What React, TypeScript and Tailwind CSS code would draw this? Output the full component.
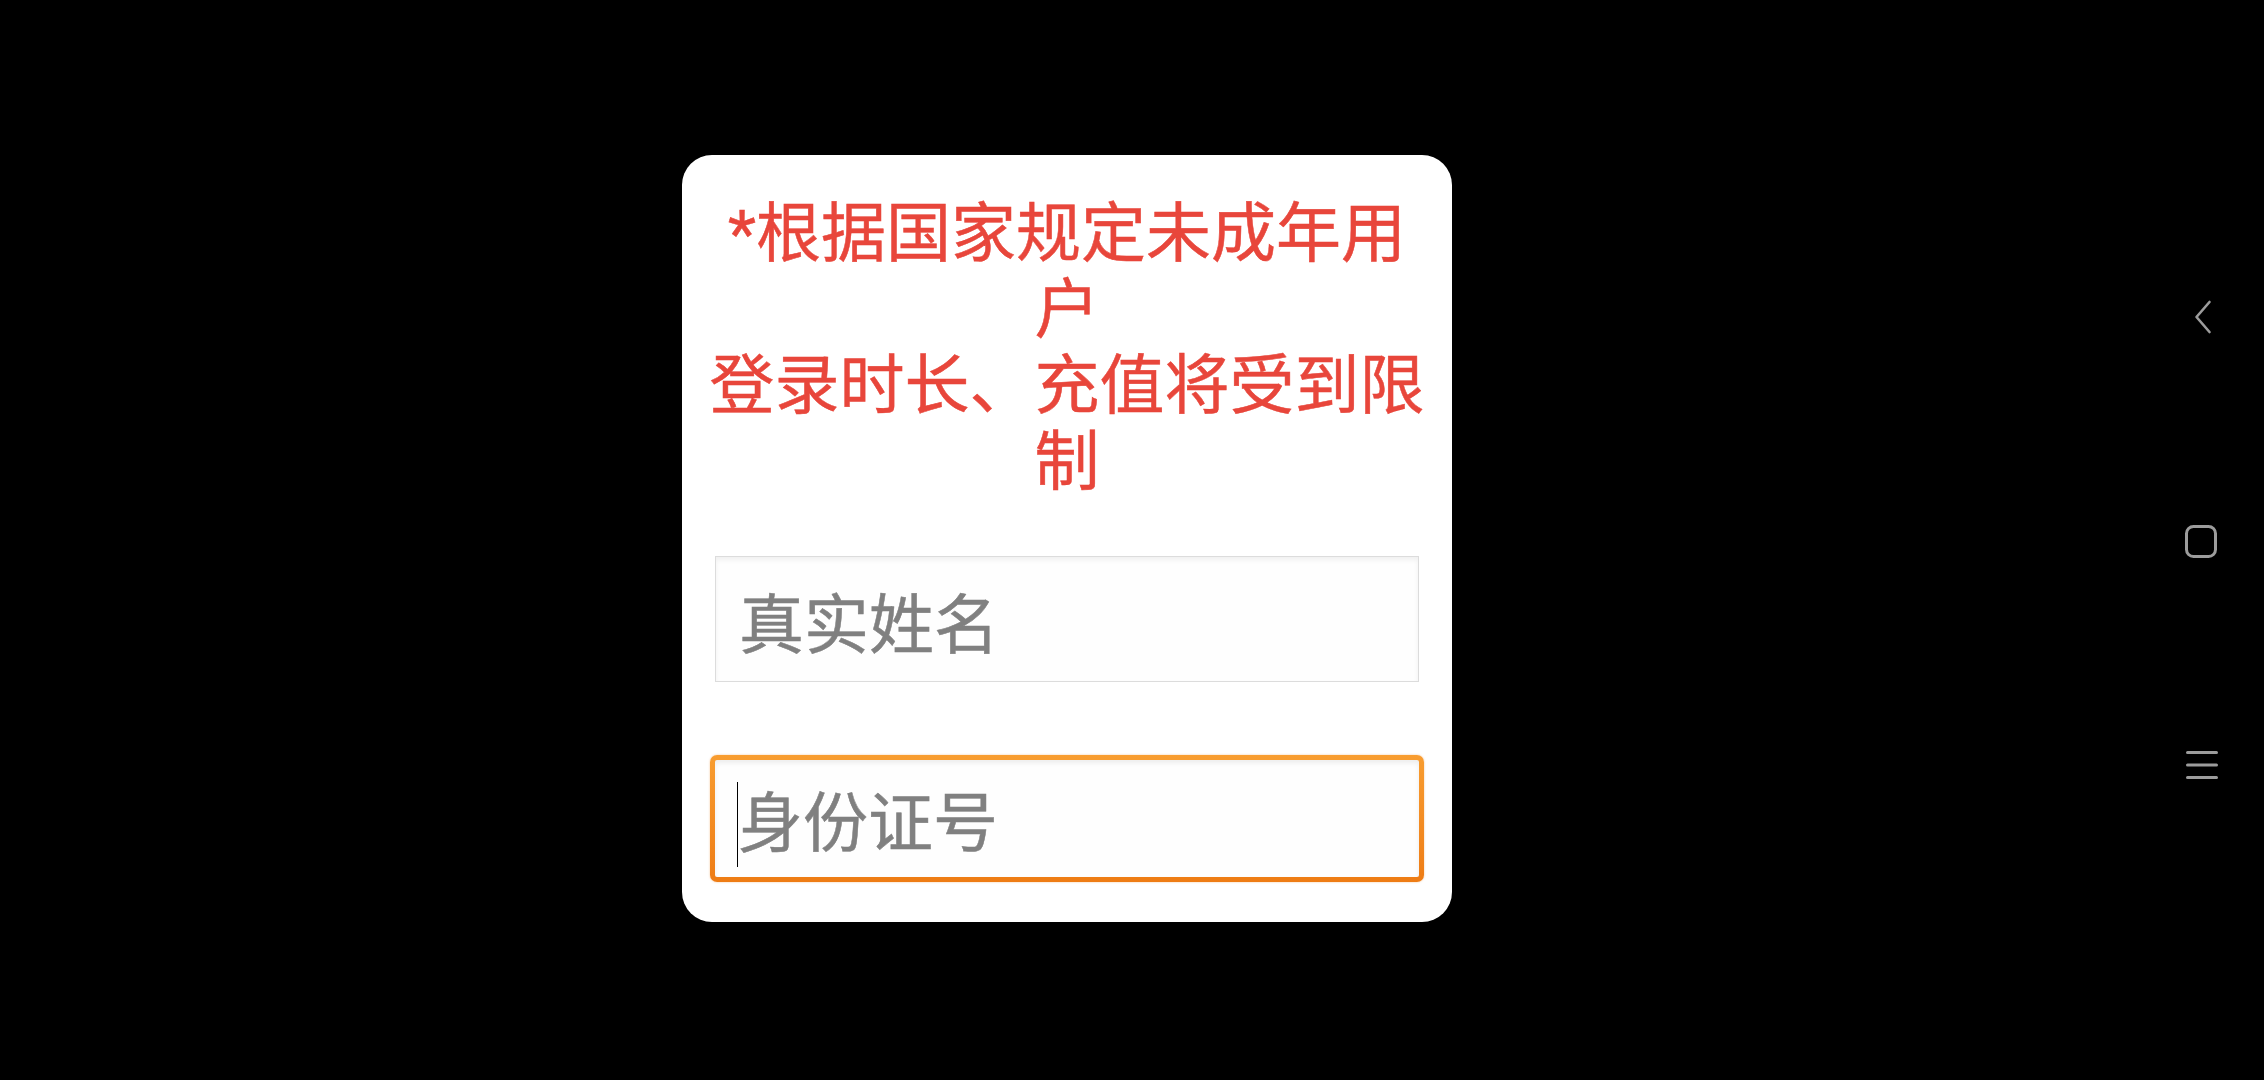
import React from "react";

const FONT = { fontFamily: 'Roboto, "Noto Sans CJK SC", "Noto Sans", sans-serif' };

function NavBar() {
  return (
    <div className="w-[130px] h-full flex flex-col items-start">
      <svg className="mt-[300px] ml-[59px]" width="20" height="34" viewBox="0 0 20 34" fill="none">
        <path d="M16.5 2 L3.5 17 L16.5 32" stroke="#9c9c9c" strokeWidth="2.6" strokeLinecap="round" strokeLinejoin="round" />
      </svg>
      <svg className="mt-[191px] ml-[51px]" width="32" height="33" viewBox="0 0 32 33" fill="none">
        <rect x="1.5" y="1.5" width="29" height="30" rx="7" stroke="#9c9c9c" strokeWidth="3" />
      </svg>
      <svg className="mt-[192px] ml-[52px]" width="32" height="31" viewBox="0 0 32 31" fill="none">
        <path d="M1.5 2.5 H30.5 M1.5 15 H30.5 M1.5 27.5 H30.5" stroke="#9c9c9c" strokeWidth="3" strokeLinecap="round" />
      </svg>
    </div>
  );
}

export default function App() {
  return (
    <div className="w-full h-screen bg-black flex overflow-hidden" style={FONT}>
      <div className="flex-1 flex items-center justify-center pb-[4px]">
        <div className="w-[770px] bg-white rounded-[30px] px-[25px] pt-[41px] pb-[40px] flex flex-col">
          <div className="w-full text-center text-[65px] leading-[76px] text-[#e8463b] [-webkit-text-stroke:0.5px_#e8463b]">
            <div>*根据国家规定未成年用户</div>
            <div>登录时长、充值将受到限制</div>
          </div>

          <div className="mt-[56px] self-center w-[704px] h-[126px] border border-[#dcdcdc] bg-[#fefefe] shadow-[inset_0_3px_5px_rgba(0,0,0,0.06)] flex items-center pl-[23px] pt-[16px]">
            <span className="text-[65px] leading-none text-[#808080] [-webkit-text-stroke:0.5px_#808080]">真实姓名</span>
          </div>

          <div className="mt-[73px] self-center w-[714px] h-[127px] rounded-[7px] p-[5px] bg-gradient-to-b from-[#f89d30] to-[#ee7c14] shadow-[0_0_2px_rgba(240,130,30,0.5)]">
            <div className="w-full h-full rounded-[2px] bg-[#fefefe] shadow-[inset_0_3px_5px_rgba(0,0,0,0.07)] flex items-center pl-[22px] pt-[13px]">
              <span className="inline-block w-px h-[85px] bg-black"></span>
              <span className="text-[65px] leading-none text-[#808080] [-webkit-text-stroke:0.5px_#808080]">身份证号</span>
            </div>
          </div>
        </div>
      </div>
      <NavBar />
    </div>
  );
}
